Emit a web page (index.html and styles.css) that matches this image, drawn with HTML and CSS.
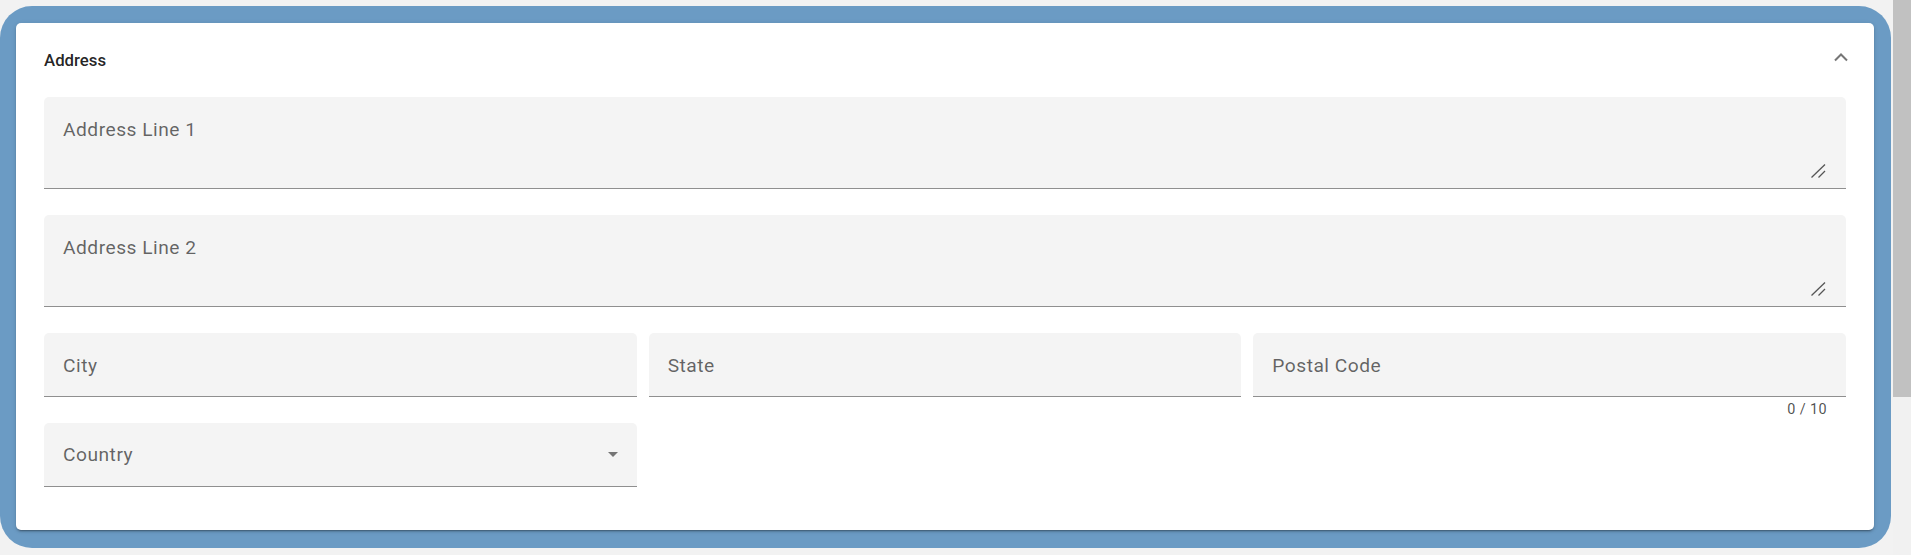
FILE: index.html
```html
<!DOCTYPE html>
<html lang="en">
<head>
<meta charset="utf-8">
<title>Address</title>
<link rel="stylesheet" href="styles.css">
</head>
<body>
<div class="app">
  <main class="page">
    <section class="frame">
      <div class="panel">
        <header class="panel-header">
          <span class="panel-title">Address</span>
          <svg class="chevron" width="14" height="9" viewBox="0 0 14 9"><polyline points="1,7.5 7,1.5 13,7.5" fill="none" stroke="#767676" stroke-width="2"/></svg>
        </header>
        <div class="panel-body">
          <div class="field-wrap">
            <div class="field field-area">
              <span class="label">Address Line 1</span>
              <svg class="grip" width="15" height="14" viewBox="0 0 15 14"><line x1="0.5" y1="13.5" x2="14" y2="0.5" stroke="#555" stroke-width="1.3"/><line x1="7.5" y1="13.5" x2="14" y2="7" stroke="#555" stroke-width="1.3"/></svg>
            </div>
            <div class="subscript"></div>
          </div>
          <div class="field-wrap">
            <div class="field field-area">
              <span class="label">Address Line 2</span>
              <svg class="grip" width="15" height="14" viewBox="0 0 15 14"><line x1="0.5" y1="13.5" x2="14" y2="0.5" stroke="#555" stroke-width="1.3"/><line x1="7.5" y1="13.5" x2="14" y2="7" stroke="#555" stroke-width="1.3"/></svg>
            </div>
            <div class="subscript"></div>
          </div>
          <div class="grid3">
            <div class="field-wrap">
              <div class="field"><span class="label">City</span></div>
              <div class="subscript"></div>
            </div>
            <div class="field-wrap">
              <div class="field"><span class="label">State</span></div>
              <div class="subscript"></div>
            </div>
            <div class="field-wrap">
              <div class="field"><span class="label">Postal Code</span></div>
              <div class="subscript"><span class="hint">0 / 10</span></div>
            </div>
          </div>
          <div class="grid3">
            <div class="field-wrap">
              <div class="field field-select">
                <span class="label">Country</span>
                <span class="arrow"></span>
              </div>
              <div class="subscript"></div>
            </div>
          </div>
        </div>
      </div>
    </section>
  </main>
  <div class="scrollbar"><div class="thumb"></div></div>
</div>
</body>
</html>
```

FILE: styles.css
```css
* { box-sizing: border-box; }

html, body {
  margin: 0;
  padding: 0;
  height: 555px;
  overflow: hidden;
  background: #f2f2f2;
  font-family: Roboto, "Liberation Sans", Arial, sans-serif;
}

.app {
  display: flex;
  height: 555px;
}

.page {
  flex: 1;
  display: flex;
  flex-direction: column;
  padding: 6px 2px 7px 0;
}

.frame {
  flex: 1;
  background: #6b9bc4;
  border-radius: 32px;
  padding: 17px 17px 18px 16px;
  display: flex;
}

.panel {
  flex: 1;
  background: #ffffff;
  border-radius: 5px;
  box-shadow: 0 3px 1px -2px rgba(0,0,0,.2), 0 2px 2px 0 rgba(0,0,0,.14), 0 1px 5px 0 rgba(0,0,0,.12);
  display: flex;
  flex-direction: column;
}

.panel-header {
  height: 74px;
  display: flex;
  align-items: center;
  justify-content: space-between;
  padding: 0 26px 0 28px;
}

.panel-title {
  font-size: 16.8px;
  font-weight: 500;
  line-height: 24px;
  color: rgba(0,0,0,.87);
}

.chevron {
  display: block;
  margin-bottom: 5px;
}

.panel-body {
  padding: 0 28px 17px;
  display: flex;
  flex-direction: column;
}

.grid3 {
  display: grid;
  grid-template-columns: repeat(3, 1fr);
  column-gap: 12px;
}

.field-wrap {
  display: flex;
  flex-direction: column;
}

.field {
  height: 64px;
  background: #f4f4f4;
  border-radius: 5px 5px 0 0;
  border-bottom: 1px solid #8f8f8f;
  padding: 16px 19px 0 19px;
  display: flex;
  align-items: flex-start;
}

.field-area {
  height: 92px;
  flex-direction: column;
  padding-right: 0;
}

.label {
  font-size: 19.2px;
  line-height: 24px;
  letter-spacing: 0.5px;
  color: rgba(0,0,0,.6);
  padding-top: 5px;
}

.grip {
  display: block;
  margin-top: auto;
  align-self: flex-end;
  margin-right: 20px;
  margin-bottom: 10px;
}

.field-select {
  align-items: center;
  padding-top: 0;
  justify-content: space-between;
}

.field-select .label {
  padding-top: 1px;
}

.arrow {
  width: 0;
  height: 0;
  border-left: 5.5px solid transparent;
  border-right: 5.5px solid transparent;
  border-top: 5px solid #757575;
}

.subscript {
  height: 26px;
  display: flex;
  justify-content: flex-end;
  padding: 3px 19px 0 19px;
}

.hint {
  font-size: 14.4px;
  line-height: 20px;
  letter-spacing: 0.4px;
  color: rgba(0,0,0,.7);
}

.scrollbar {
  width: 18px;
  background: #f1f1f1;
  display: flex;
  flex-direction: column;
}

.thumb {
  height: 397px;
  background: #c1c1c1;
}
```
